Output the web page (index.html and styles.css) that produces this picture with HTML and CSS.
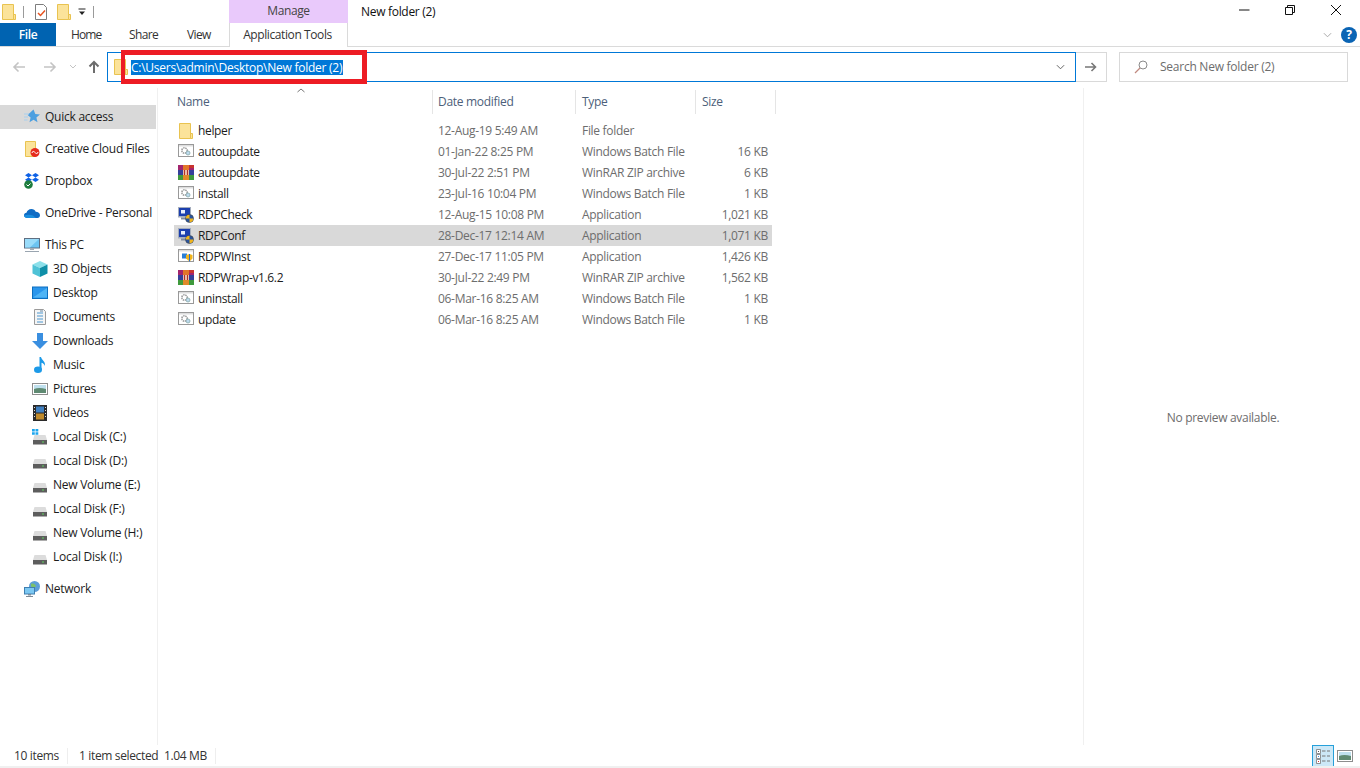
FILE: index.html
```html
<!DOCTYPE html>
<html lang="en">
<head>
<meta charset="utf-8">
<title>New folder (2)</title>
<link rel="stylesheet" href="styles.css">
</head>
<body>
<svg class="defs" width="0" height="0">
  <symbol id="folder" viewBox="0 0 16 16"><path d="M1.500 .5h11v15h-11z" fill="#fbe39a" stroke="#e9c350"/><path d="M12.500 10.500h2v5h-2z" fill="#fbe39a" stroke="#e9c350"/></symbol>
  <symbol id="bat" viewBox="0 0 16 16"><rect x=".5" y=".5" width="15" height="12" fill="#fff" stroke="#999"/><path d="M1 1h14v1.500H1z" fill="#ddd"/><circle cx="6.500" cy="6.500" r="2.700" fill="none" stroke="#9a9a9a" stroke-width="1.500" stroke-dasharray="1.500 .7"/><circle cx="10" cy="9" r="2" fill="#bcd9ee" stroke="#8aa" stroke-width=".8"/></symbol>
  <symbol id="rar" viewBox="0 0 16 16"><path d="M0 0h16v5H0z" fill="#a2246e"/><path d="M5 0h6v5H5z" fill="#e2762a"/><path d="M11 0h5v3h-5z" fill="#c8342f"/><path d="M0 5h16v5H0z" fill="#35409a"/><path d="M5 5h6v5H5z" fill="#f6e3c8"/><path d="M0 10h16v5H0z" fill="#3f9a3c"/><path d="M5 10h6v5H5z" fill="#e08a2a"/><path d="M6.500 5v5M9.500 5v5" stroke="#b3302a" stroke-width="1.400"/></symbol>
  <symbol id="rdp" viewBox="0 0 16 16"><rect x="0" y="0" width="13" height="10.500" fill="#a4adbd"/><rect x="1" y="1" width="11" height="8" fill="#1c3fae"/><path d="M3 10.500h8v2H3z" fill="#808a9c"/><path d="M3 3h4v3.500H3z" fill="#e8eefc"/><circle cx="11.500" cy="11.500" r="4" fill="#27539e" stroke="#444" stroke-width=".6"/><path d="M11.500 7.700v3.800h-3.800a3.800 3.800 0 0 1 3.800-3.800zM11.500 11.500h3.800a3.800 3.800 0 0 1-3.800 3.800z" fill="#f0b41c"/></symbol>
  <symbol id="winst" viewBox="0 0 16 16"><rect x=".5" y=".5" width="15" height="12" fill="#fff" stroke="#999"/><path d="M1 1h14v1.500H1z" fill="#ddd"/><path d="M4 4.500h5v5H4z" fill="#2a7fd6"/><path d="M8 6l3.500-1 3 1v3.500l-3 3-3.500-3z" fill="#f0b41c"/><path d="M11.500 5v7.500" stroke="#2a6fc6"/></symbol>
  <symbol id="star" viewBox="0 0 16 16"><path d="M9.500 .5l1.800 4.500 4.700.4-3.600 3.100 1.100 4.700-4-2.500-4 2.500 1.100-4.700-3-2.600z" fill="#4c9fe0"/><path d="M0 5h5M0 8h4M0 11h3.500" stroke="#a7cfee"/></symbol>
  <symbol id="cc" viewBox="0 0 16 16"><path d="M1.500 .5h10v15h-10z" fill="#fbe39a" stroke="#e9c350"/><circle cx="11" cy="11.500" r="4.500" fill="#e62b1e"/><path d="M8 12c0-2 2.500-2 3-.5s3 1.500 3-.5" fill="none" stroke="#fff"/></symbol>
  <symbol id="dropbox" viewBox="0 0 16 16"><path d="M4.500 0l3.500 2.200-3.500 2.300L1 2.200zM11.500 0L15 2.200l-3.500 2.300L8 2.200zM4.500 4.500L8 6.800l-3.500 2.300L1 6.800zM11.500 4.500L15 6.800l-3.500 2.300L8 6.800z" fill="#0f62e6"/><circle cx="4.500" cy="11.500" r="4.300" fill="#1e7d3e"/><path d="M2.500 11.500l1.500 1.500 2.500-2.500" stroke="#fff" fill="none"/></symbol>
  <symbol id="onedrive" viewBox="0 0 16 16"><path d="M3.500 13C1 13 0 11.500 0 10.300 0 9 1 8 2.500 7.800 3 5.800 4.800 4 7.500 4c2 0 3.500 1 4.200 2.700 2.400 0 4.300 1.500 4.300 3.500 0 1.500-1 2.800-2.500 2.800z" fill="#0f6cc4"/><path d="M3.500 13C1.500 13 0 12 0 10.500c3-1 6-1 9 0l3 2.500z" fill="#1a8fdf"/></symbol>
  <symbol id="pc" viewBox="0 0 16 16"><rect x=".5" y="1.500" width="15" height="9.500" fill="#6cc4f2" stroke="#5f6f82"/><path d="M1 2h14l-9 8.500H1z" fill="#9adcfa"/><path d="M6 11h4v2H6z" fill="#a5adb6"/><path d="M1 14h14v1H1z" fill="#9aa5b0"/></symbol>
  <symbol id="cube" viewBox="0 0 16 16"><path d="M8 0l7.500 3.500L8 7 .5 3.500z" fill="#8ce0ea"/><path d="M.5 3.500L8 7v9L.5 12.500z" fill="#4fc2d6"/><path d="M15.500 3.500L8 7v9l7.500-3.500z" fill="#0f8fa8"/></symbol>
  <symbol id="desktop" viewBox="0 0 16 16"><rect x=".5" y="2" width="15" height="11.500" fill="#2a96ec" stroke="#0c6fc0"/><path d="M1 12.500L15 3v9.500z" fill="#4fb4f5"/><path d="M5 13h6v1H5z" fill="#0c6fc0"/></symbol>
  <symbol id="docs" viewBox="0 0 16 16"><path d="M2.500 .5h9l2 2v13h-11z" fill="#f5f5f5" stroke="#9a9a9a"/><path d="M5 4h6M5 7h6M5 10h6M5 13h6" stroke="#4c97cf"/><path d="M8 2h3" stroke="#6a8aa5"/></symbol>
  <symbol id="down" viewBox="0 0 16 16"><path d="M5 0h6v8h5l-8 8-8-8h5z" fill="#3a8fe0"/></symbol>
  <symbol id="music" viewBox="0 0 16 16"><ellipse cx="6" cy="12.800" rx="4" ry="3.200" fill="#1c9ae8"/><path d="M7.500 13V0h1.500c.5 3 5 4.500 3.800 9C12.500 7 10.500 6 9.500 5.800V13z" fill="#1c9ae8"/></symbol>
  <symbol id="pics" viewBox="0 0 16 16"><rect x=".5" y="2.500" width="15" height="11" fill="#fff" stroke="#8d8d8d"/><path d="M2 4h12v4H2z" fill="#bfe0ee"/><path d="M2 8c4-1.500 8-1 12 0v4H2z" fill="#5f8a72"/></symbol>
  <symbol id="video" viewBox="0 0 16 16"><rect x="1" y="0" width="14" height="16" fill="#2a2a2a"/><path d="M4 1.500h8v6H4z" fill="#3f7fc0"/><path d="M4 8.500h8v6H4z" fill="#c08a2a"/><path d="M2 2h1v1H2zM2 5h1v1H2zM2 8h1v1H2zM2 11h1v1H2zM13 2h1v1h-1zM13 5h1v1h-1zM13 8h1v1h-1zM13 11h1v1h-1z" fill="#ddd"/></symbol>
  <symbol id="disk" viewBox="0 0 16 16"><path d="M2.500 6h11L15 11H1z" fill="#dcdcdc"/><rect x="1" y="11" width="14" height="4.500" fill="#5d5d5d"/><rect x="10" y="12.500" width="2" height="1" fill="#5fd35f"/></symbol>
  <symbol id="cdisk" viewBox="0 0 16 16"><path d="M2.500 6h11L15 11H1z" fill="#dcdcdc"/><rect x="1" y="11" width="14" height="4.500" fill="#5d5d5d"/><rect x="10" y="12.500" width="2" height="1" fill="#5fd35f"/><path d="M0 0h2.800v2.500H0zM3.500 0h2.800v2.500H3.500zM0 3.200h2.800v2.500H0zM3.500 3.200h2.800v2.500H3.500z" fill="#1ca5ee"/></symbol>
  <symbol id="network" viewBox="0 0 16 16"><circle cx="10.500" cy="5.500" r="5.500" fill="#5c9ed8"/><path d="M7 3c2-1 4 0 5 2-1 2-4 2-5 0z" fill="#7cc06a"/><rect x=".5" y="6.500" width="10" height="6.500" fill="#7cc8f2" stroke="#3f7fb0"/><path d="M4 13h3v1.500H4zM2 15h7v1H2z" fill="#7d8a96"/></symbol>
  <symbol id="check" viewBox="0 0 16 16"><path d="M2.500 .5h8l3 3v12h-11z" fill="#fff" stroke="#7d7d7d"/><path d="M5 9l2.500 2.500L12 6.500" fill="none" stroke="#e8531f" stroke-width="1.500"/></symbol>
</svg>

<div class="window">
  <header class="titlebar">
    <div class="qat">
      <svg class="i16"><use href="#folder"/></svg>
      <span class="qat-sep"></span>
      <svg class="i16 qat-check"><use href="#check"/></svg>
      <svg class="i16 qat-folder"><use href="#folder"/></svg>
      <svg class="qat-drop" viewBox="0 0 8 8"><path d="M.5 1h7" stroke="#222" fill="none"/><path d="M1 3.500h6L4 7z" fill="#222"/></svg>
      <span class="qat-sep qat-sep2"></span>
    </div>
    <div class="manage">Manage</div>
    <div class="win-title">New folder (2)</div>
    <div class="caption">
      <span class="cap-btn"><svg viewBox="0 0 12 12"><path d="M1 6h10.500" stroke="#111" fill="none"/></svg></span>
      <span class="cap-btn"><svg viewBox="0 0 12 12"><path d="M1.500 3.500h7v7h-7zM3.500 3.500v-2h7v7h-2" stroke="#111" fill="none"/></svg></span>
      <span class="cap-btn"><svg viewBox="0 0 12 12"><path d="M1 1l10 10M11 1L1 11" stroke="#111" fill="none"/></svg></span>
    </div>
  </header>

  <nav class="tabs">
    <span class="tab-file">File</span>
    <span class="tab tab-home">Home</span>
    <span class="tab tab-share">Share</span>
    <span class="tab tab-view">View</span>
    <span class="tab-app">Application Tools</span>
    <span class="tabs-right">
      <svg class="ribbon-chevron" viewBox="0 0 10 6"><path d="M1 1l4 4 4-4" stroke="#a0a0a0" fill="none"/></svg>
      <span class="help">?</span>
    </span>
  </nav>

  <div class="addressrow">
    <div class="navbtns">
      <svg class="nav-arrow" viewBox="0 0 14 12"><path d="M13 6H2M6.500 1.500L2 6l4.500 4.500" stroke="#c4c4c4" stroke-width="1.600" fill="none"/></svg>
      <svg class="nav-arrow" viewBox="0 0 14 12"><path d="M1 6h11M7.500 1.500L12 6l-4.500 4.500" stroke="#c4c4c4" stroke-width="1.600" fill="none"/></svg>
      <svg class="nav-down" viewBox="0 0 8 5"><path d="M1 1l3 3 3-3" stroke="#c4c4c4" fill="none"/></svg>
      <svg class="nav-up" viewBox="0 0 12 14"><path d="M6 13V2M1.500 6.500L6 2l4.500 4.500" stroke="#6d6d6d" stroke-width="2" fill="none"/></svg>
    </div>
    <div class="address">
      <svg class="i16 addr-folder"><use href="#folder"/></svg>
      <span class="addr-text">C:\Users\admin\Desktop\New folder (2)</span>
      <svg class="addr-chevron" viewBox="0 0 10 6"><path d="M1 1l4 4 4-4" stroke="#555" fill="none"/></svg>
      <span class="red-mark"></span>
    </div>
    <div class="go"><svg viewBox="0 0 12 10"><path d="M0 5h10M6.500 1L10.500 5l-4 4" stroke="#777" stroke-width="1.600" fill="none"/></svg></div>
    <div class="search">
      <svg class="search-icon" viewBox="0 0 14 14"><circle cx="9" cy="5" r="4" fill="none" stroke="#8a8a8a"/><path d="M6 8l-5 5" stroke="#c08a80" stroke-width="1.200"/></svg>
      <span>Search New folder (2)</span>
    </div>
  </div>

  <main class="body">
    <aside class="sidebar">
      <div class="group">
        <div class="nav-item selected"><svg class="i16"><use href="#star"/></svg>Quick access</div>
      </div>
      <div class="group"><div class="nav-item"><svg class="i16"><use href="#cc"/></svg>Creative Cloud Files</div></div>
      <div class="group"><div class="nav-item"><svg class="i16"><use href="#dropbox"/></svg>Dropbox</div></div>
      <div class="group"><div class="nav-item"><svg class="i16"><use href="#onedrive"/></svg>OneDrive - Personal</div></div>
      <div class="group">
        <div class="nav-item"><svg class="i16"><use href="#pc"/></svg>This PC</div>
        <div class="nav-item sub"><svg class="i16"><use href="#cube"/></svg>3D Objects</div>
        <div class="nav-item sub"><svg class="i16"><use href="#desktop"/></svg>Desktop</div>
        <div class="nav-item sub"><svg class="i16"><use href="#docs"/></svg>Documents</div>
        <div class="nav-item sub"><svg class="i16"><use href="#down"/></svg>Downloads</div>
        <div class="nav-item sub"><svg class="i16"><use href="#music"/></svg>Music</div>
        <div class="nav-item sub"><svg class="i16"><use href="#pics"/></svg>Pictures</div>
        <div class="nav-item sub"><svg class="i16"><use href="#video"/></svg>Videos</div>
        <div class="nav-item sub"><svg class="i16"><use href="#cdisk"/></svg>Local Disk (C:)</div>
        <div class="nav-item sub"><svg class="i16"><use href="#disk"/></svg>Local Disk (D:)</div>
        <div class="nav-item sub"><svg class="i16"><use href="#disk"/></svg>New Volume (E:)</div>
        <div class="nav-item sub"><svg class="i16"><use href="#disk"/></svg>Local Disk (F:)</div>
        <div class="nav-item sub"><svg class="i16"><use href="#disk"/></svg>New Volume (H:)</div>
        <div class="nav-item sub"><svg class="i16"><use href="#disk"/></svg>Local Disk (I:)</div>
      </div>
      <div class="group"><div class="nav-item"><svg class="i16"><use href="#network"/></svg>Network</div></div>
    </aside>

    <section class="files">
      <div class="columns">
        <span class="col">Name<svg class="sort" viewBox="0 0 8 5"><path d="M.5 4L4 1l3.500 3" stroke="#777" fill="none"/></svg></span>
        <span class="col">Date modified</span>
        <span class="col">Type</span>
        <span class="col">Size</span>
      </div>
      <div class="row"><span class="name"><svg class="i16"><use href="#folder"/></svg>helper</span><span>12-Aug-19 5:49 AM</span><span>File folder</span><span class="size"></span></div>
      <div class="row"><span class="name"><svg class="i16"><use href="#bat"/></svg>autoupdate</span><span>01-Jan-22 8:25 PM</span><span>Windows Batch File</span><span class="size">16 KB</span></div>
      <div class="row"><span class="name"><svg class="i16"><use href="#rar"/></svg>autoupdate</span><span>30-Jul-22 2:51 PM</span><span>WinRAR ZIP archive</span><span class="size">6 KB</span></div>
      <div class="row"><span class="name"><svg class="i16"><use href="#bat"/></svg>install</span><span>23-Jul-16 10:04 PM</span><span>Windows Batch File</span><span class="size">1 KB</span></div>
      <div class="row"><span class="name"><svg class="i16"><use href="#rdp"/></svg>RDPCheck</span><span>12-Aug-15 10:08 PM</span><span>Application</span><span class="size">1,021 KB</span></div>
      <div class="row row-selected"><span class="name"><svg class="i16"><use href="#rdp"/></svg>RDPConf</span><span>28-Dec-17 12:14 AM</span><span>Application</span><span class="size">1,071 KB</span></div>
      <div class="row"><span class="name"><svg class="i16"><use href="#winst"/></svg>RDPWInst</span><span>27-Dec-17 11:05 PM</span><span>Application</span><span class="size">1,426 KB</span></div>
      <div class="row"><span class="name"><svg class="i16"><use href="#rar"/></svg>RDPWrap-v1.6.2</span><span>30-Jul-22 2:49 PM</span><span>WinRAR ZIP archive</span><span class="size">1,562 KB</span></div>
      <div class="row"><span class="name"><svg class="i16"><use href="#bat"/></svg>uninstall</span><span>06-Mar-16 8:25 AM</span><span>Windows Batch File</span><span class="size">1 KB</span></div>
      <div class="row"><span class="name"><svg class="i16"><use href="#bat"/></svg>update</span><span>06-Mar-16 8:25 AM</span><span>Windows Batch File</span><span class="size">1 KB</span></div>
    </section>

    <aside class="preview">No preview available.</aside>
  </main>

  <footer class="status">
    <span class="st-items">10 items</span>
    <span class="st-sel">1 item selected</span>
    <span class="st-size">1.04 MB</span>
    <span class="st-views">
      <span class="view-btn active"><svg viewBox="0 0 16 16"><path d="M1.500 1.500h4v4h-4zM1.500 6.500h4v4h-4zM1.500 11.500h4v4h-4z" fill="#fff" stroke="#777" stroke-width=".8"/><path d="M3 3h1v1H3z" fill="#555"/><path d="M3 8h1v1H3z" fill="#3a8fe0"/><path d="M3 13h1v1H3z" fill="#d33"/><path d="M7 3h3.500M12 3h3M7 8h3.500M12 8h3M7 13h3.500M12 13h3" stroke="#777"/></svg></span>
      <span class="view-btn view-thumb"><svg viewBox="0 0 16 16"><use href="#pics"/></svg></span>
    </span>
  </footer>
</div>
</body>
</html>
```
FILE: styles.css
```css
* { box-sizing: border-box; }
html, body { margin: 0; height: 100%; }
body { font: 12px/16px "Open Sans", "Noto Sans", "Liberation Sans", sans-serif; color: #1e1e1e; background: #fff; overflow: hidden; }
.defs { position: absolute; }
.i16 { width: 16px; height: 16px; flex: none; }

.window { width: 1360px; height: 768px; display: flex; flex-direction: column; border-bottom: 2px solid #f0f0f0; }

.titlebar { height: 23px; display: flex; flex: none; }
.qat { width: 229px; display: flex; align-items: center; padding: 0 0 0 1px; }
.qat-sep { width: 1px; height: 12px; background: #9a9a9a; margin-left: 6px; }
.qat-check { margin-left: 9px; }
.qat-folder { margin-left: 7px; }
.qat-drop { width: 8px; height: 8px; margin-left: 6px; }
.qat-sep2 { margin-left: 7px; }
.manage { width: 119px; background: #e9c9fb; color: #444; text-align: center; line-height: 21px; letter-spacing: -.4px; }
.win-title { margin-left: 13px; line-height: 24px; color: #111; flex: 1; letter-spacing: -.3px; }
.caption { display: flex; padding-right: 1px; }
.cap-btn { width: 46px; height: 20px; display: flex; align-items: center; justify-content: center; }
.cap-btn svg { width: 12px; height: 12px; }

.tabs { height: 24px; flex: none; display: flex; border-bottom: 1px solid #dadada; line-height: 23px; color: #333; letter-spacing: -.4px; }
.tab-file { width: 56px; background: #0063b1; color: #fff; text-align: center; font-weight: 600; height: 23px; }
.tab { display: block; letter-spacing: -.6px; }
.tab-home { margin-left: 15px; width: 58px; letter-spacing: -.9px; }
.tab-share { width: 58px; }
.tab-view { width: 42px; }
.tab-app { width: 119px; border: 1px solid #dadada; border-top: 0; border-bottom: 0; padding-right: 2px; text-align: center; background: #fff; height: 24px; }
.tabs-right { margin-left: auto; display: flex; align-items: center; height: 23px; padding-right: 3px; }
.ribbon-chevron { width: 9px; height: 6px; margin-right: 9px; }
.help { width: 16px; height: 16px; border-radius: 50%; background: #0a64b4; color: #fff; font-weight: 700; font-size: 12px; line-height: 16px; text-align: center; letter-spacing: 0; }

.addressrow { height: 41px; flex: none; display: flex; align-items: flex-start; padding-top: 5px; }
.navbtns { width: 107px; height: 29px; display: flex; align-items: center; padding-left: 12px; }
.nav-arrow { width: 14px; height: 12px; margin-right: 15px; }
.nav-arrow + .nav-arrow { margin-left: 2px; margin-right: 12px; }
.nav-down { width: 8px; height: 5px; }
.nav-up { width: 12px; height: 14px; margin-left: 11px; }
.address { position: relative; width: 969px; height: 30px; border: 1px solid #0078d7; display: flex; align-items: center; padding-left: 5px; }
.addr-folder { flex: none; }
.addr-text { margin-left: 2px; background: #0078d7; color: #fff; line-height: 15px; letter-spacing: -.25px; width: 212px; white-space: nowrap; }
.addr-chevron { width: 9px; height: 6px; margin-left: auto; margin-right: 10px; }
.red-mark { position: absolute; left: 13px; top: -3px; width: 246px; height: 34px; border: 5px solid #ed1c24; border-left-width: 4px; }
.go { width: 31px; height: 30px; border: 1px solid #d9d9d9; border-left: 0; display: flex; align-items: center; justify-content: center; }
.go svg { width: 12px; height: 10px; }
.search { width: 229px; height: 30px; margin-left: 12px; border: 1px solid #d9d9d9; display: flex; align-items: center; padding-left: 14px; color: #6d6d6d; letter-spacing: -.25px; }
.search-icon { width: 14px; height: 14px; margin-right: 12px; }

.body { flex: 1; display: flex; min-height: 0; }
.sidebar { width: 158px; flex: none; border-right: 1px solid #f0f0f0; padding-top: 17px; letter-spacing: -.25px; }
.group { margin-bottom: 8px; }
.nav-item { height: 24px; display: flex; align-items: center; gap: 5px; padding-left: 24px; width: 156px; white-space: nowrap; color: #1c1c1c; }
.nav-item.selected { background: #d9d9d9; }
.nav-item.sub { padding-left: 32px; }

.files { width: 926px; flex: none; border-right: 1px solid #f0f0f0; padding-left: 16px; padding-top: 2px; letter-spacing: -.3px; }
.columns { display: grid; grid-template-columns: 259px 143px 120px 80px; height: 24px; margin-bottom: 6px; color: #4c607a; }
.col { position: relative; padding-left: 6px; line-height: 23px; border-right: 1px solid #e5e5e5; }
.col:first-child { padding-left: 3px; }
.col:nth-child(2) { padding-left: 5px; }
.sort { position: absolute; left: 123px; top: -2px; width: 8px; height: 5px; }
.row { display: grid; grid-template-columns: 258px 144px 119px 77px; width: 598px; height: 21px; align-items: center; color: #6d6d6d; }
.row > span { padding-left: 6px; white-space: nowrap; }
.row > .name { display: flex; align-items: center; gap: 4px; color: #1c1c1c; padding-left: 4px; letter-spacing: -.35px; }
.row > .size { padding: 0 4px 0 0; text-align: right; }
.row-selected { background: #d9d9d9; }

.preview { flex: 1; display: flex; align-items: flex-start; justify-content: center; padding-top: 322px; padding-left: 2px; color: #6d6d6d; letter-spacing: -.3px; }

.status { height: 21px; flex: none; position: relative; display: flex; align-items: center; letter-spacing: -.35px; color: #333; }
.st-items { margin-left: 14px; width: 54px; border-right: 1px solid #eee; }
.st-sel { margin-left: 11px; width: 85px; }
.st-size { width: 52px; border-right: 1px solid #eee; }
.st-views { margin-left: auto; display: flex; align-items: flex-end; height: 21px; margin-right: 6px; gap: 2px; }
.view-btn { width: 22px; height: 21px; display: flex; align-items: center; justify-content: center; }
.view-btn svg { width: 16px; height: 16px; }
.view-btn.active { background: #cce8f7; border: 1px solid #26a0da; border-bottom: 0; }
.view-btn.view-thumb { width: 18px; }
```
